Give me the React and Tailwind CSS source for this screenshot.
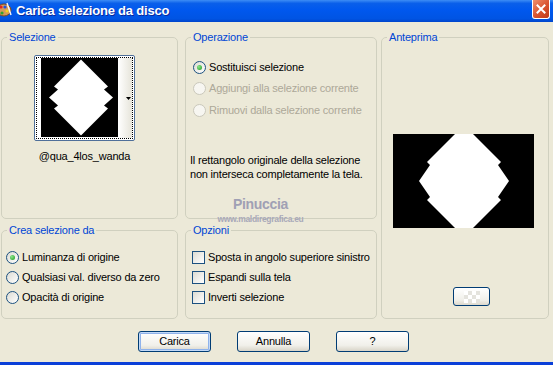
import React from "react";

function Legend({ children }) {
  return (
    <legend className="ml-[5px] px-[2px] leading-[13px] text-[#0046D5]">{children}</legend>
  );
}

function Radio({ checked, disabled }) {
  if (disabled) {
    return <span className="block h-[13px] w-[13px] shrink-0 rounded-full border border-[#CAC8BB] bg-[#F7F6F1]" />;
  }
  return (
    <span className="flex h-[13px] w-[13px] shrink-0 items-center justify-center rounded-full border border-[#1C5180] bg-[linear-gradient(135deg,#DCDBD3,#FFFFFF)]">
      {checked && (
        <span className="block h-[5px] w-[5px] rounded-full bg-[radial-gradient(circle_at_35%_35%,#8BE58B,#1C9A1C)]" />
      )}
    </span>
  );
}

function RadioRow({ label, checked, disabled }) {
  return (
    <div className="flex h-[13px] items-center gap-[3px]">
      <Radio checked={checked} disabled={disabled} />
      <span className={disabled ? "leading-[13px] text-[#ACA899]" : "leading-[13px]"}>{label}</span>
    </div>
  );
}

function CheckRow({ label }) {
  return (
    <div className="flex h-[13px] items-center gap-[3px]">
      <span className="block h-[13px] w-[13px] shrink-0 border border-[#1C5180] bg-[linear-gradient(135deg,#DCDBD3,#FFFFFF)]" />
      <span className="leading-[13px]">{label}</span>
    </div>
  );
}

function XPButton({ children, primary }) {
  return (
    <button
      className={
        primary
          ? "h-[21px] w-[73px] rounded-[3px] border border-[#003C74] bg-[linear-gradient(to_bottom,#FFFFFF,#F1F0EA_70%,#D8D4C8)] leading-[13px] shadow-[inset_0_0_0_1px_#C2D9F7,inset_0_0_0_2px_#8FB2EB]"
          : "h-[21px] w-[73px] rounded-[3px] border border-[#003C74] bg-[linear-gradient(to_bottom,#FFFFFF,#F1F0EA_70%,#D8D4C8)] leading-[13px]"
      }
    >
      {children}
    </button>
  );
}

const shape = "0,-38 -27,-11 -23,-8 -32,0 -23,8 -27,11 0,38 27,11 23,8 32,0 23,-8 27,-11";
const previewShape =
  "-9,-47 9,-47 37,-19 34,-16 45,0 34,16 37,19 9,47 -9,47 -37,19 -34,16 -45,0 -34,-16 -37,-19";

export default function App() {
  return (
    <div className="relative flex h-[365px] w-[553px] flex-col overflow-hidden bg-[#ECE9D8] font-['Liberation_Sans',Arial,sans-serif] text-[11px] tracking-[-0.2px] text-black">
      {/* title bar */}
      <div className="flex h-[22px] shrink-0 items-start bg-[linear-gradient(to_bottom,#3D8DF5_0%,#0A5FEA_15%,#0058EE_45%,#0054E3_85%,#0045CB_100%)]">
        <svg width="12" height="15" viewBox="0 0 12 15" className="mt-[2px]">
          <ellipse cx="4" cy="8" rx="7" ry="6" fill="#D49A5A" stroke="#7A4A1E" strokeWidth="1" />
          <circle cx="1" cy="5" r="1.6" fill="#E02020" />
          <circle cx="5" cy="5" r="1.6" fill="#2050E0" />
          <circle cx="7" cy="9" r="1.6" fill="#F2D020" />
          <circle cx="2" cy="11" r="1.6" fill="#30A030" />
          <path d="M7 1 L11 13" stroke="#F4F4F4" strokeWidth="1.5" />
        </svg>
        <span className="ml-[4px] mt-[3px] text-[13px] font-bold leading-[16px] tracking-[-0.2px] text-white [text-shadow:1px_1px_0_#0A2A9C]">
          Carica selezione da disco
        </span>
        <div className="ml-auto mr-[3px] flex h-[19px] w-[18px] items-center justify-center rounded-b-[3px] border border-t-0 border-white bg-[linear-gradient(135deg,#F0906E,#D8522E_55%,#C03A18)]">
          <svg width="10" height="10" viewBox="0 0 10 10">
            <path d="M1.5 1.5 L8.5 8.5 M8.5 1.5 L1.5 8.5" stroke="white" strokeWidth="2" strokeLinecap="square" />
          </svg>
        </div>
      </div>

      {/* group boxes */}
      <div className="flex pl-[1px] pt-[9px]">
        <div className="grid grid-cols-[177px_192px] grid-rows-[188px_95px] gap-x-[7px] gap-y-[5px]">
          <fieldset className="min-w-0 rounded-[5px] border border-[#D0D0BF]">
            <Legend>Selezione</Legend>
            <div className="ml-[32px] mt-[11px] flex w-[101px] flex-col items-center">
              <div className="h-[86px] w-[101px] rounded-[2px] border border-[#4F6F99] bg-white p-[1px]">
                <div className="flex h-full w-full border border-dotted border-black">
                  <svg width="77" height="79" viewBox="0 0 77 79" className="ml-[4px] shrink-0">
                    <rect width="77" height="79" fill="black" />
                    <polygon points={shape} transform="translate(40 39.5)" fill="white" />
                  </svg>
                  <div className="flex flex-1 items-center justify-end bg-[linear-gradient(to_right,#FFFFFF,#E6E4DA)] pr-[1px]">
                    <svg width="5" height="3" viewBox="0 0 5 3">
                      <path d="M0 0 H5 L2.5 3 Z" fill="black" />
                    </svg>
                  </div>
                </div>
              </div>
              <div className="mt-[9px] leading-[13px]">@qua_4los_wanda</div>
            </div>
          </fieldset>

          <fieldset className="min-w-0 rounded-[5px] border border-[#D0D0BF]">
            <Legend>Operazione</Legend>
            <div className="flex flex-col gap-[8.5px] pl-[7px] pt-[16.5px]">
              <RadioRow checked label="Sostituisci selezione" />
              <RadioRow disabled label="Aggiungi alla selezione corrente" />
              <RadioRow disabled label="Rimuovi dalla selezione corrente" />
            </div>
            <p className="ml-[4px] mt-[36.5px] leading-[14px]">
              Il rettangolo originale della selezione
              <br />
              non interseca completamente la tela.
            </p>
          </fieldset>

          <fieldset className="min-w-0 rounded-[5px] border border-[#D0D0BF]">
            <Legend>Crea selezione da</Legend>
            <div className="flex flex-col gap-[7px] pl-[4px] pt-[13.5px]">
              <RadioRow checked label="Luminanza di origine" />
              <RadioRow label="Qualsiasi val. diverso da zero" />
              <RadioRow label="Opacità di origine" />
            </div>
          </fieldset>

          <fieldset className="min-w-0 rounded-[5px] border border-[#D0D0BF]">
            <Legend>Opzioni</Legend>
            <div className="flex flex-col gap-[7px] pl-[6px] pt-[13.5px]">
              <CheckRow label="Sposta in angolo superiore sinistro" />
              <CheckRow label="Espandi sulla tela" />
              <CheckRow label="Inverti selezione" />
            </div>
          </fieldset>
        </div>

        <fieldset className="ml-[4px] h-[288px] w-[168px] min-w-0 rounded-[5px] border border-[#D0D0BF]">
          <Legend>Anteprima</Legend>
          <svg width="141" height="94" viewBox="0 0 141 94" className="ml-[11px] mt-[90px] block">
            <rect width="141" height="94" fill="black" />
            <polygon points={previewShape} transform="translate(71 47)" fill="white" />
          </svg>
          <div className="ml-[71px] mt-[59px] flex h-[19px] w-[37px] items-center justify-center rounded-[3px] border border-[#003C74] bg-[linear-gradient(to_bottom,#FFFFFF,#F1F0EA_70%,#DCD8CC)]">
            <svg width="16" height="12" viewBox="0 0 16 12">
              <rect x="0" y="0" width="4" height="4" fill="#FFFFFF" />
              <rect x="4" y="0" width="4" height="4" fill="#E4E3DD" />
              <rect x="8" y="0" width="4" height="4" fill="#FFFFFF" />
              <rect x="12" y="0" width="4" height="4" fill="#E4E3DD" />
              <rect x="0" y="4" width="4" height="4" fill="#E4E3DD" />
              <rect x="4" y="4" width="4" height="4" fill="#FFFFFF" />
              <rect x="8" y="4" width="4" height="4" fill="#E4E3DD" />
              <rect x="12" y="4" width="4" height="4" fill="#FFFFFF" />
              <rect x="0" y="8" width="4" height="4" fill="#FFFFFF" />
              <rect x="4" y="8" width="4" height="4" fill="#E4E3DD" />
              <rect x="8" y="8" width="4" height="4" fill="#FFFFFF" />
              <rect x="12" y="8" width="4" height="4" fill="#E4E3DD" />
            </svg>
          </div>
        </fieldset>
      </div>

      {/* buttons */}
      <div className="mt-[12px] flex gap-[26px] pl-[138px]">
        <XPButton primary>Carica</XPButton>
        <XPButton>Annulla</XPButton>
        <XPButton>?</XPButton>
      </div>

      <div className="mt-auto h-[3px] bg-[#0A3FD8]" />

      {/* watermark */}
      <div className="absolute left-[214px] top-[197px] flex w-[93px] flex-col items-center leading-none">
        <span className="text-[14px] font-bold tracking-[-0.3px] text-[#A0A0B4]">Pinuccia</span>
        <span className="mt-[4px] text-[8.5px] font-bold tracking-[-0.3px] text-[#A8A8B8]">www.maldiregrafica.eu</span>
      </div>
    </div>
  );
}
